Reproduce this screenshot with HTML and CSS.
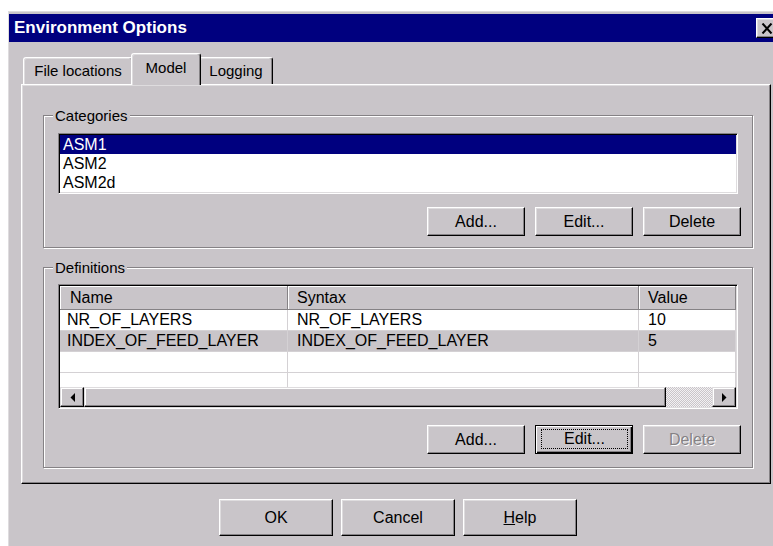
FILE: index.html
```html
<!DOCTYPE html>
<html lang="en">
<head>
<meta charset="utf-8">
<title>Environment Options</title>
<link rel="stylesheet" href="styles.css">
</head>
<body>
<div class="dialog">
  <div class="titlebar">
    <span class="title">Environment Options</span>
    <button class="close-btn" type="button" aria-label="Close">
      <svg width="12" height="11" viewBox="0 0 12 11"><path d="M1.5 0.5 L10.5 10.5 M10.5 0.5 L1.5 10.5" stroke="#000" stroke-width="2"/></svg>
    </button>
  </div>

  <div class="dialog-body">
    <div class="tabs">
      <div class="tab tab-files">File locations</div>
      <div class="tab tab-model active">Model</div>
      <div class="tab tab-logging">Logging</div>
    </div>

    <div class="tab-panel">
      <fieldset class="group">
        <legend>Categories</legend>
        <ul class="listbox">
          <li class="selected">ASM1</li>
          <li>ASM2</li>
          <li>ASM2d</li>
        </ul>
        <div class="btn-row">
          <button class="btn" type="button">Add...</button>
          <button class="btn" type="button">Edit...</button>
          <button class="btn" type="button">Delete</button>
        </div>
      </fieldset>

      <fieldset class="group group-defs">
        <legend>Definitions</legend>
        <div class="grid-view">
          <div class="grid-head">
            <div class="hcell hcell-name">Name</div>
            <div class="hcell">Syntax</div>
            <div class="hcell">Value</div>
          </div>
          <div class="grid-body">
            <div class="grow">
              <div class="cell cell-name">NR_OF_LAYERS</div>
              <div class="cell">NR_OF_LAYERS</div>
              <div class="cell">10</div>
            </div>
            <div class="grow grow-alt">
              <div class="cell cell-name">INDEX_OF_FEED_LAYER</div>
              <div class="cell">INDEX_OF_FEED_LAYER</div>
              <div class="cell">5</div>
            </div>
            <div class="grow">
              <div class="cell cell-name"></div>
              <div class="cell"></div>
              <div class="cell"></div>
            </div>
            <div class="grow">
              <div class="cell cell-name"></div>
              <div class="cell"></div>
              <div class="cell"></div>
            </div>
          </div>
          <div class="hscroll">
            <div class="sb-btn">
              <svg width="5" height="9" viewBox="0 0 5 9"><polygon points="5,0 5,9 0.5,4.5" fill="#000"/></svg>
            </div>
            <div class="sb-thumb"></div>
            <div class="sb-track"></div>
            <div class="sb-btn">
              <svg width="5" height="9" viewBox="0 0 5 9"><polygon points="0,0 0,9 4.5,4.5" fill="#000"/></svg>
            </div>
          </div>
        </div>
        <div class="btn-row btn-row-defs">
          <button class="btn" type="button">Add...</button>
          <button class="btn btn-default" type="button"><span class="focus-rect">Edit...</span></button>
          <button class="btn btn-disabled" type="button">Delete</button>
        </div>
      </fieldset>
    </div>

    <div class="dialog-buttons">
      <button class="btn btn-big" type="button">OK</button>
      <button class="btn btn-big" type="button">Cancel</button>
      <button class="btn btn-big" type="button"><u>H</u>elp</button>
    </div>
  </div>
</div>
</body>
</html>
```

FILE: styles.css
```css
* { box-sizing: border-box; }

html, body {
  margin: 0;
  overflow: hidden;
}

body {
  width: 773px;
  height: 546px;
  background: #fff;
  font-family: "Liberation Sans", Arial, sans-serif;
  font-size: 16px;
  color: #000;
}

/* ---- window frame ---- */
.dialog {
  width: 780px;
  height: 560px;
  margin: 11px 0 0 8px;
  padding-top: 2px;
  background: #c9c5c9;
  border-top: 1px solid #dedcde;
  border-left: 1px solid #dedcde;
}

.titlebar {
  height: 28px;
  background: #00007f;
  display: flex;
  align-items: center;
  justify-content: space-between;
  padding: 0 10px 0 5px;
}

.title {
  color: #fff;
  font-weight: bold;
  font-size: 17px;
}

.close-btn {
  width: 22px;
  height: 20px;
  padding: 0;
  display: flex;
  align-items: center;
  justify-content: center;
  background: #c9c5c9;
  border: 1px solid;
  border-color: #fff #000 #000 #fff;
  box-shadow: inset -1px -1px #858285, inset 1px 1px #dedcde;
}

.dialog-body {
  padding: 11px 17px 0 12px;
}

/* ---- tabs ---- */
.tabs {
  display: flex;
  align-items: flex-end;
  margin-left: 2px;
  height: 31px;
}

.tab {
  position: relative;
  height: 27px;
  padding-top: 3px;
  font-size: 15px;
  line-height: 20px;
  text-align: center;
  border: 1px solid;
  border-bottom: none;
  border-color: #fff #000 transparent #fff;
  border-radius: 3px 3px 0 0;
  box-shadow: inset -1px 0 #858285, inset 1px 1px #dedcde;
  background: #c9c5c9;
}

.tab-files { width: 110px; }
.tab-model { width: 70px; }
.tab-logging { width: 74px; }

.tab.active {
  z-index: 1;
  height: 32px;
  padding-top: 4px;
  margin: 0 -2px -1px -2px;
}

.tab-panel {
  border: 1px solid;
  border-color: #fff #000 #000 #fff;
  box-shadow: inset -1px -1px #858285, inset 1px 1px #dedcde;
  padding: 22px 17px 15px 21px;
}

/* ---- group boxes ---- */
.group {
  margin: 0;
  padding: 9px 14px 11px 14px;
  border: 1px solid #858285;
  box-shadow: inset 1px 1px #fff, 1px 1px #fff;
  min-width: 0;
}

.group legend {
  margin-left: -5px;
  padding: 0 2px;
  font-size: 15px;
  line-height: 17px;
  background: #c9c5c9;
}

.group-defs {
  margin-top: 11px;
  padding: 8px 14px 13px 14px;
}

/* ---- list box ---- */
.listbox {
  list-style: none;
  margin: 0;
  padding: 1px;
  background: #fff;
  border: 1px solid;
  border-color: #858285 #fff #fff #858285;
  box-shadow: inset 1px 1px #000, inset -1px -1px #dedcde;
}

.listbox li {
  height: 19px;
  line-height: 19px;
  padding-left: 3px;
}

.listbox li.selected {
  background: #00007f;
  color: #fff;
}

/* ---- push buttons ---- */
.btn-row {
  display: flex;
  justify-content: flex-end;
  gap: 10px;
  margin: 13px -3px 0 0;
}

.btn-row-defs { margin-top: 16px; }

.btn {
  width: 98px;
  height: 29px;
  padding: 0;
  font-family: inherit;
  font-size: 16px;
  color: #000;
  background: #c9c5c9;
  border: 1px solid;
  border-color: #fff #000 #000 #fff;
  box-shadow: inset -1px -1px #858285, inset 1px 1px #dedcde;
}

.btn-default {
  display: flex;
  padding: 3px 4px 4px 5px;
  border-color: #000;
  box-shadow: inset 1px 1px #fff, inset -1px -1px #000, inset -2px -2px #858285;
}

.focus-rect {
  flex: 1;
  display: flex;
  align-items: center;
  justify-content: center;
  border: 1px dotted #000;
}

.btn-disabled {
  color: #858285;
  text-shadow: 1px 1px 0 #fff;
}

.btn-big {
  width: 114px;
  height: 37px;
}

.dialog-buttons {
  display: flex;
  justify-content: center;
  gap: 8px;
  margin-top: 15px;
  padding-left: 4px;
}

/* ---- definitions grid ---- */
.grid-view {
  background: #fff;
  border: 1px solid;
  border-color: #858285 #fff #fff #858285;
  box-shadow: inset 1px 1px #000, inset -1px -1px #dedcde;
  padding: 1px;
}

.grid-head,
.grow {
  display: grid;
  grid-template-columns: 228px 351px 1fr;
}

.grid-head {
  height: 24px;
  background: #c9c5c9;
}

.hcell {
  line-height: 23px;
  padding-left: 9px;
  border-right: 1px solid #858285;
  border-bottom: 1px solid #858285;
  box-shadow: inset 1px 1px #fff;
  white-space: nowrap;
  overflow: hidden;
}

.hcell-name { padding-left: 10px; }

.grid-body {
  height: 77px;
  overflow: hidden;
}

.grow { height: 21px; }

.grow-alt { background: #c9c5c9; }

.cell {
  line-height: 20px;
  padding-left: 9px;
  border-right: 1px solid #d4d1d4;
  border-bottom: 1px solid #d4d1d4;
  white-space: nowrap;
  overflow: hidden;
}

.cell-name { padding-left: 7px; }

.hscroll {
  display: flex;
  height: 20px;
}

.sb-btn,
.sb-thumb {
  background: #c9c5c9;
  border: 1px solid;
  border-color: #dedcde #000 #000 #dedcde;
  box-shadow: inset -1px -1px #858285, inset 1px 1px #fff;
}

.sb-btn {
  width: 24px;
  display: flex;
  align-items: center;
  justify-content: center;
}

.sb-thumb { width: 582px; }

.sb-track {
  flex: 1;
  background: repeating-conic-gradient(#f2f0f2 0 25%, #c9c5c9 0 50%) 0 0 / 2px 2px;
}
```
